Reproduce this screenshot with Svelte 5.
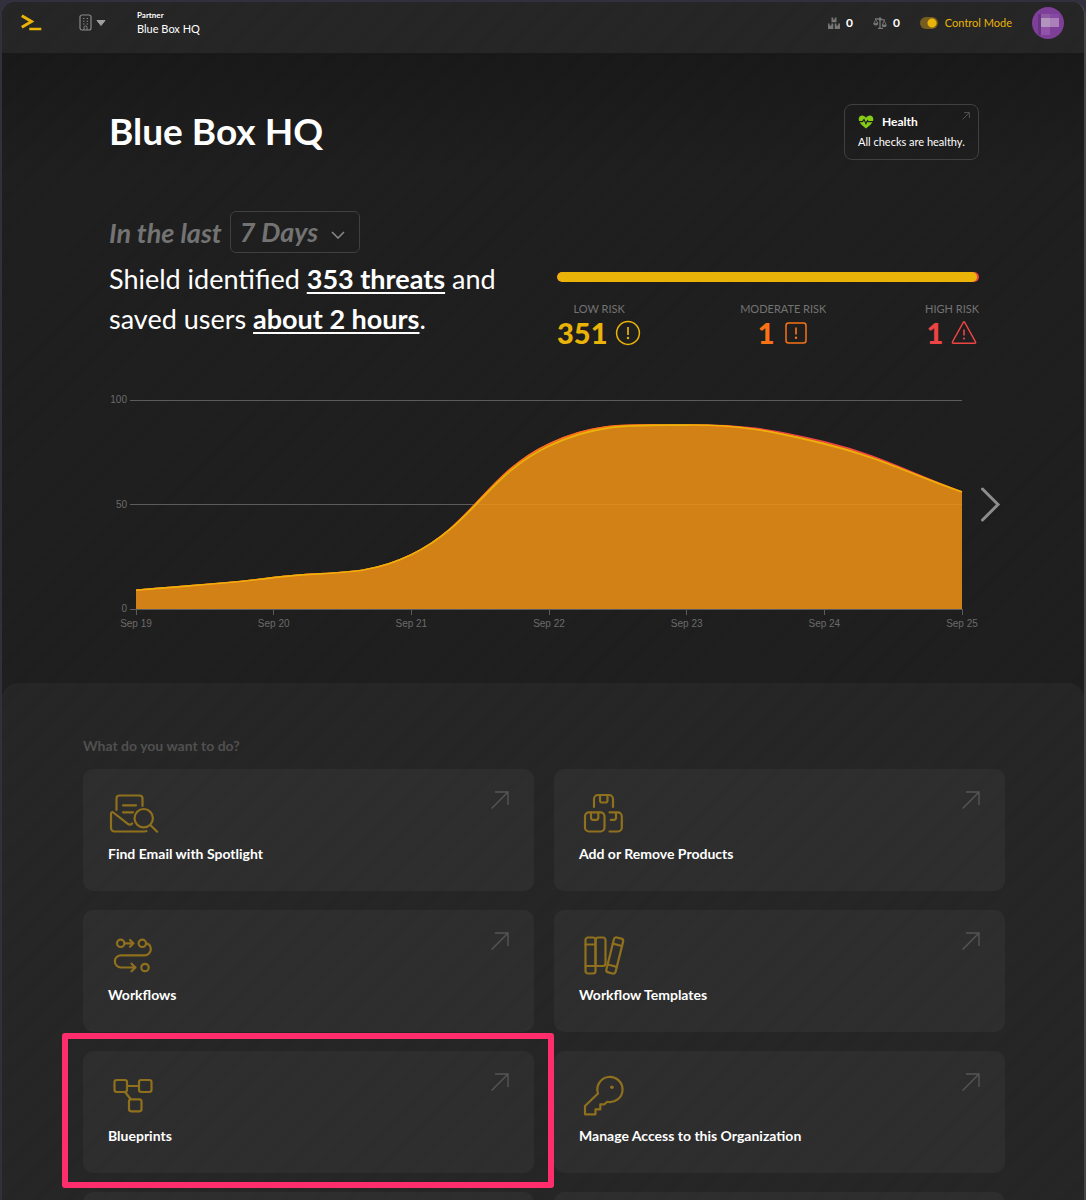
<script lang="ts">
  type Point = { x: number; y: number };

  const days = ['Sep 19', 'Sep 20', 'Sep 21', 'Sep 22', 'Sep 23', 'Sep 24', 'Sep 25'];
  const low = [9, 15, 26, 78, 88, 79, 56];
  const moderate = [0, 0, 0, 1, 0, 0, 0];
  const high = [0, 0, 0, 0, 0, 1, 0];

  const plot = { left: 27, right: 853, top: 10, bottom: 219 };
  const ticks = [0, 50, 100];
  const tension = 0.4;

  const sum = (values: number[]) => values.reduce((a, b) => a + b, 0);
  const total = sum(low) + sum(moderate) + sum(high);

  function xAt(i: number): number {
    return plot.left + (i * (plot.right - plot.left)) / (days.length - 1);
  }

  function yAt(value: number): number {
    return plot.bottom - (value * (plot.bottom - plot.top)) / 100;
  }

  // control points of a cardinal spline, weighted by segment length
  function controls(prev: Point, cur: Point, next: Point) {
    const d01 = Math.hypot(cur.x - prev.x, cur.y - prev.y);
    const d12 = Math.hypot(next.x - cur.x, next.y - cur.y);
    const all = d01 + d12 || 1;
    const fa = (tension * d01) / all;
    const fb = (tension * d12) / all;
    const dx = next.x - prev.x;
    const dy = next.y - prev.y;
    return {
      before: { x: cur.x - fa * dx, y: cur.y - fa * dy },
      after: { x: cur.x + fb * dx, y: cur.y + fb * dy }
    };
  }

  function curve(values: number[]): string {
    const pts = values.map((v, i) => ({ x: xAt(i), y: yAt(v) }));
    const cps = pts.map((p, i) => controls(pts[i - 1] ?? p, p, pts[i + 1] ?? p));
    let d = `M${pts[0].x} ${pts[0].y}`;
    for (let i = 1; i < pts.length; i++) {
      const a = cps[i - 1].after;
      const b = cps[i].before;
      d += `C${a.x} ${a.y} ${b.x} ${b.y} ${pts[i].x} ${pts[i].y}`;
    }
    return d;
  }

  const lowLine = curve(low);
  const moderateLine = curve(low.map((v, i) => v + moderate[i]));
  const highLine = curve(low.map((v, i) => v + moderate[i] + high[i]));

  const actions = [
    { icon: 'spotlight', title: 'Find Email with Spotlight' },
    { icon: 'products', title: 'Add or Remove Products' },
    { icon: 'workflows', title: 'Workflows' },
    { icon: 'templates', title: 'Workflow Templates' },
    { icon: 'blueprints', title: 'Blueprints', highlighted: true },
    { icon: 'access', title: 'Manage Access to this Organization' },
    { icon: '', title: '' },
    { icon: '', title: '' }
  ];

  let period = $state('7 Days');
  let controlMode = $state(true);
</script>

<div class="frame">
  <header>
    <a class="logo" href="#home" aria-label="Home">
      <svg width="22" height="18" viewBox="0 0 22 18">
        <path d="M.8 1.700 10.500 7.500.8 13.300" fill="none" stroke="#eab308" stroke-width="3" />
        <path d="M8.300 15H20.300" stroke="#eab308" stroke-width="2.400" />
      </svg>
    </a>
    <button class="org" aria-label="Switch organization">
      <svg width="14" height="18" viewBox="0 0 14 18" fill="none" stroke="#8a8a8a">
        <rect x="1" y="1" width="11" height="15" rx="2" stroke-width="1.200" />
        <path d="M5 16v-2.600a1.500 1.500 0 0 1 3 0V16" />
        <path d="M4 4.500h1.400M7.600 4.500H9M4 7.300h1.400M7.600 7.300H9M4 10h1.400M7.600 10H9" stroke-width="1.100" />
      </svg>
      <svg width="10" height="6" viewBox="0 0 10 6"><path d="M1 .5h8L5 5.500z" fill="#a0a0a0" stroke="#a0a0a0" stroke-linejoin="round" /></svg>
    </button>
    <div class="tenant">
      <span class="kind">Partner</span>
      <span class="name">Blue Box HQ</span>
    </div>

    <div class="tools">
      <a class="count" href="#products" aria-label="Products">
        <svg width="12" height="12" viewBox="0 0 12 12" fill="#777">
          <path d="M3.500.5h1.700v2h1.600v-2h1.700v4.800h-5zM0 6.500h1.600v1.900h1.800V6.500h1.900V12H.5L0 11.500zM6.700 6.500h1.700v1.900h1.800V6.500H12v5l-.5.5H6.700z" />
        </svg>
        <span>0</span>
      </a>
      <a class="count" href="#balance" aria-label="Balance">
        <svg width="14" height="12" viewBox="0 0 14 12" fill="none" stroke="#777">
          <path d="M7 1v10.300M5 11.300h5M2 1.600 12 3.200" stroke-width="1.300" />
          <circle cx="7" cy="2" r="1.200" fill="#777" />
          <path d="M.8 6.300 2.800 2.300l2 4zM9.200 8l2-4.300 2 4.300z" stroke-width=".9" />
          <path d="M.3 6.300h5a2.500 2.300 0 0 1-5 0zM8.700 8h5a2.500 2.300 0 0 1-5 0z" fill="#777" stroke="none" />
        </svg>
        <span>0</span>
      </a>
      <label class="mode">
        <input type="checkbox" bind:checked={controlMode} />
        Control Mode
      </label>
      <button class="avatar" aria-label="Account">
        <svg width="32" height="32" viewBox="0 0 32 32">
          <circle cx="16" cy="16" r="16" fill="#7e3f98" />
          <path d="M6 7h3v21H6z" fill="#6a3283" />
          <path d="M9 7h9v4H9z" fill="#8d5aa3" />
          <path d="M18 7h9v4h-9z" fill="#8449a0" />
          <path d="M9 11h9v9H9z" fill="#b295bd" />
          <path d="M18 11h9v9h-9z" fill="#aa7fba" />
          <path d="M9 20h9v8H9z" fill="#9152a9" />
        </svg>
      </button>
    </div>
  </header>

  <main>
    <section class="hero">
      <div class="heading">
        <h1>Blue Box HQ</h1>
        <a class="health" href="#health">
          <span class="health-title">
            <svg width="16" height="14" viewBox="0 0 16 14">
              <path d="M8 13.500C5 11 1 8.300.7 4.600.5 2.200 2.200.6 4.200.6 5.800.6 7.200 1.500 8 2.900 8.800 1.500 10.200.6 11.800.6c2 0 3.700 1.600 3.500 4C15 8.300 11 11 8 13.500z" fill="#84cc16" />
              <path d="M0 6.700h4.500L6 4.600l2 4 1.500-3 .8 1.100H16" fill="none" stroke="#1e1e1e" stroke-width="1.200" />
            </svg>
            Health
            <svg class="open" width="8" height="8" viewBox="0 0 8 8"><path d="M.6 7.400 7.200.8M2 .6h5.400V6" fill="none" stroke="#525252" /></svg>
          </span>
          <span class="health-text">All checks are healthy.</span>
        </a>
      </div>

      <div class="summary">
        <div class="story">
          <div class="range">
            <label for="period">In the last</label>
            <div class="select">
              <select id="period" bind:value={period}>
                <option>7 Days</option>
              </select>
              <svg width="14" height="8" viewBox="0 0 14 8"><path d="M1 1l6 6 6-6" fill="none" stroke="#8a8a8a" stroke-width="1.500" /></svg>
            </div>
          </div>
          <p>
            Shield identified <a href="#threats">353 threats</a> and<br />
            saved users <a href="#hours">about 2 hours</a>.
          </p>
        </div>

        <div class="risk">
          <div class="bar">
            <span class="part low" style="width: {(sum(low) / total) * 100}%"></span>
          </div>
          <dl>
            <div class="stat">
              <dt>LOW RISK</dt>
              <dd class="is-low">
                {sum(low)}
                <svg width="26" height="26" viewBox="0 0 26 26" fill="none" stroke="currentColor">
                  <circle cx="13" cy="13" r="11.400" stroke-width="1.500" />
                  <path d="M13 7v8" stroke-width="1.700" />
                  <circle cx="13" cy="18" r="1.200" fill="currentColor" stroke="none" />
                </svg>
              </dd>
            </div>
            <div class="stat">
              <dt>MODERATE RISK</dt>
              <dd class="is-moderate">
                {sum(moderate)}
                <svg width="26" height="26" viewBox="0 0 26 26" fill="none" stroke="currentColor">
                  <rect x="3" y="3" width="20" height="20" rx="2.500" stroke-width="1.500" />
                  <path d="M13 7.500v7" stroke-width="1.700" />
                  <circle cx="13" cy="17.800" r="1.200" fill="currentColor" stroke="none" />
                </svg>
              </dd>
            </div>
            <div class="stat">
              <dt>HIGH RISK</dt>
              <dd class="is-high">
                {sum(high)}
                <svg width="26" height="26" viewBox="0 0 26 26" fill="none" stroke="currentColor">
                  <path d="M12.300 2.300 1.500 21.800q-.6 1.400.8 1.400h21.400q1.400 0 .8-1.400L13.700 2.300q-.7-1-1.400 0z" stroke-width="1.400" />
                  <path d="M13 9.500v6" stroke-width="1.600" />
                  <circle cx="13" cy="18.500" r="1.100" fill="currentColor" stroke="none" />
                </svg>
              </dd>
            </div>
          </dl>
        </div>
      </div>

      <div class="chart-row">
        <svg class="chart" viewBox="0 0 870 240" role="img" aria-label="Threats per day">
          {#each ticks as tick}
            <path class="grid" d="M21 {Math.floor(yAt(tick)) + 0.5}H{plot.right}" />
            <text x="18" y={yAt(tick) + 3} text-anchor="end">{tick}</text>
          {/each}
          <path class="area" d="{highLine}V{plot.bottom}H{plot.left}Z" />
          <path class="line high" d={highLine} />
          <path class="line moderate" d={moderateLine} />
          <path class="line low" d={lowLine} />
          {#each days as day, i}
            <path class="grid" d="M{Math.floor(xAt(i)) + 0.5} {plot.bottom}v6" />
            <text x={xAt(i)} y="237" text-anchor="middle">{day}</text>
          {/each}
        </svg>
        <button class="next" aria-label="Next chart">
          <svg width="22" height="36" viewBox="0 0 22 36"><path d="M3.500 3 19 18.500 3.500 34" fill="none" stroke="#8c8c8c" stroke-width="3" stroke-linecap="round" /></svg>
        </button>
      </div>
    </section>

    <section class="actions">
      <h2>What do you want to do?</h2>
      <div class="cards">
        {#each actions as action}
          {#if action.title}
            <a class="card" class:highlighted={action.highlighted} href="#{action.icon}">
              <span class="card-top">
                <svg class="icon" width="50" height="44" viewBox="0 0 50 44">
                  {#if action.icon === 'spotlight'}
                    <path d="M8.500 19V7.500a3 3 0 0 1 3-3h20a3 3 0 0 1 3 3V15M15 14.300h13M15 21.300h10" />
                    <path d="M38.500 40Q38 40.500 36 40.500H6.500a3.500 3.500 0 0 1-3.500-3.500V22.500c0-1.300 1.200-1.900 2.300-1L19.500 32.700q2.500 2 4.700-.2" />
                    <circle cx="35.700" cy="27.200" r="9.200" />
                    <path d="M42.300 34l6.900 6.700" />
                  {:else if action.icon === 'products'}
                    <path d="M15 16V8a4 4 0 0 1 4-4h11a4 4 0 0 1 4 4v8M21 4v5.500a2 2 0 0 0 2 2h3.500a2 2 0 0 0 2-2V4" />
                    <rect x="6" y="21.300" width="19.500" height="19.200" rx="4" />
                    <path d="M12 21.300v5.500a2 2 0 0 0 2 2h3.300a2 2 0 0 0 2-2v-5.500M30.500 21.300h8.300a4 4 0 0 1 4 4v11.200a4 4 0 0 1-4 4h-8.300M37 21.300v5.500a2 2 0 0 1-2 2h-3.300" />
                  {:else if action.icon === 'workflows'}
                    <circle cx="12.700" cy="11.300" r="3.700" />
                    <circle cx="34.300" cy="11.300" r="3.700" />
                    <circle cx="37" cy="35.500" r="3.700" />
                    <path d="M16.500 11.300h8.500M22 8l3.500 3.300-3.500 3.400M38 11.300c3 .5 4.800 3 4.800 5.700a6.300 6.300 0 0 1-6.300 6.300H13a6.100 6.100 0 0 0 0 12.200h14.500M23.500 31.700l4 3.800-4 3.800" />
                  {:else if action.icon === 'templates'}
                    <rect x="6.500" y="5.500" width="10" height="36" rx="2.500" />
                    <path d="M6.500 12.500h10M6.500 34H24a2.500 2.500 0 0 0 2.500-2.500V8A2.500 2.500 0 0 0 24 5.500h-5A2.500 2.500 0 0 0 16.500 8v26" />
                    <g transform="rotate(14 35.700 23.500)">
                      <rect x="31" y="5.500" width="9.500" height="36" rx="2.500" />
                      <path d="M31 12.500h9.500M31 34h9.500" />
                    </g>
                  {:else if action.icon === 'blueprints'}
                    <rect x="6.500" y="7" width="12.500" height="12" rx="2.200" />
                    <rect x="31" y="7" width="12.500" height="12" rx="2.200" />
                    <rect x="21" y="26.300" width="12.500" height="12" rx="2.200" />
                    <path d="M19 13h12M17.500 19.500l5 6.500" />
                  {:else if action.icon === 'access'}
                    <path d="M19 20.500 6 33v8.300h10.500v-5h4.800v-5h4.200l2.700-2.500a12.600 12.600 0 1 0-9.200-8.300z" />
                    <circle class="dot" cx="32.900" cy="14.300" r="1.800" />
                  {/if}
                </svg>
                <svg class="arrow" width="18" height="18" viewBox="0 0 18 18"><path d="M.6 17.400 17 1M4 1h13v13" /></svg>
              </span>
              <span class="card-title">{action.title}</span>
            </a>
          {:else}
            <div class="card"></div>
          {/if}
        {/each}
      </div>
    </section>
  </main>
</div>

<style>
  :global(body) {
    margin: 0;
    background: #32303c;
  }

  .frame {
    --stripes: repeating-linear-gradient(
      135deg,
      rgba(0, 0, 0, 0) 0 10px,
      rgba(0, 0, 0, 0.03) 14px 18px,
      rgba(0, 0, 0, 0) 22px
    );
    box-sizing: border-box;
    height: calc(100vh - 2px);
    margin: 2px 0 0 2px;
    overflow: hidden;
    border-right: 2px solid #454547;
    border-radius: 14px 14px 0 0;
    background: #1f1f1f;
    color: #fff;
    font-family: Lato, sans-serif;
  }

  a {
    color: inherit;
    text-decoration: none;
  }

  button {
    padding: 0;
    border: 0;
    background: none;
    cursor: pointer;
  }

  svg {
    display: block;
    flex: none;
  }

  header {
    display: flex;
    align-items: center;
    box-sizing: border-box;
    height: 51px;
    padding: 0 20px 10px 19px;
    background: var(--stripes), #262626;
  }

  .org {
    display: flex;
    align-items: center;
    gap: 3px;
    margin: 0 31px 0 36px;
  }

  .tenant {
    display: flex;
    flex-direction: column;
  }

  .kind {
    font-size: 8px;
    font-weight: 700;
    line-height: 12px;
  }

  .name {
    font-size: 11px;
    line-height: 16px;
  }

  .tools {
    display: flex;
    align-items: center;
    gap: 20px;
    margin-left: auto;
  }

  .count {
    display: flex;
    align-items: center;
    gap: 6px;
    font-size: 12px;
    font-weight: 700;
  }

  .mode {
    display: flex;
    align-items: center;
    gap: 7px;
    color: #eab308;
    font-size: 11px;
  }

  .mode input {
    appearance: none;
    width: 18px;
    height: 12px;
    margin: 0;
    border-radius: 6px;
    background: radial-gradient(circle at 6px 6px, #999 4px, #555 5px);
  }

  .mode input:checked {
    background: radial-gradient(circle at 12px 6px, #eab308 4px, #765c1e 5px);
  }

  .hero {
    padding: 51px 105px 53px 107px;
    background: var(--stripes), linear-gradient(#191919, #1f1f1f 120px);
  }

  .heading {
    display: flex;
    align-items: center;
    justify-content: space-between;
  }

  h1 {
    margin: 0;
    padding-bottom: 2px;
    font-size: 37px;
    line-height: 52px;
  }

  .health {
    display: flex;
    flex-direction: column;
    box-sizing: border-box;
    min-width: 135px;
    padding: 7px 13px;
    border: 1px solid #404040;
    border-radius: 8px;
    font-size: 11px;
    line-height: 20px;
  }

  .health-title {
    display: flex;
    align-items: center;
    gap: 8px;
    font-size: 12px;
    font-weight: 700;
  }

  .open {
    align-self: flex-start;
    margin: 0 -5px 0 auto;
  }

  .summary {
    display: grid;
    grid-template-columns: 1fr 422px;
    gap: 26px;
    margin-top: 51px;
  }

  .range {
    display: flex;
    align-items: center;
    gap: 8px;
    color: #737373;
    font-size: 27px;
    font-style: italic;
    font-weight: 700;
  }

  .select {
    position: relative;
  }

  .select select {
    appearance: none;
    display: block;
    width: 130px;
    height: 42px;
    padding: 0 9px 2px;
    border: 1px solid #404040;
    border-radius: 6px;
    background: transparent;
    color: inherit;
    font: inherit;
  }

  .select svg {
    position: absolute;
    top: 20px;
    right: 15px;
    pointer-events: none;
  }

  .story p {
    margin: 6px 0 0;
    font-size: 27px;
    line-height: 40px;
  }

  .story p a {
    font-weight: 700;
    text-decoration: underline;
    text-decoration-thickness: 2px;
    text-underline-offset: 3px;
  }

  .risk {
    padding-top: 61px;
  }

  .bar {
    height: 10px;
    overflow: hidden;
    border-radius: 5px;
    background: #ef4444;
  }

  .part {
    display: block;
    height: 100%;
    border-radius: 5px;
  }

  .part.low {
    background: #eab308;
  }

  dl {
    display: flex;
    justify-content: space-between;
    margin: 20px 0 0;
  }

  .stat {
    display: flex;
    flex-direction: column;
    align-items: center;
  }

  dt {
    color: #737373;
    font-size: 11px;
    line-height: 14px;
  }

  dd {
    display: flex;
    align-items: center;
    gap: 8px;
    margin: 0;
    font-size: 29px;
    font-weight: 900;
    line-height: 34px;
  }

  .is-low {
    color: #eab308;
  }

  .is-moderate {
    color: #f97316;
  }

  .is-high {
    color: #ef4444;
  }

  .chart-row {
    display: flex;
    align-items: center;
    margin: 40px -22px 0 0;
  }

  .chart {
    flex: 1;
    min-width: 0;
  }

  .chart text {
    fill: #6b6b6b;
    font-family: 'Liberation Sans', Arial, sans-serif;
    font-size: 10px;
  }

  .grid {
    stroke: #5c5c5c;
  }

  .area {
    fill: #f09116;
    fill-opacity: 0.86;
  }

  .line {
    fill: none;
    stroke-width: 1.6;
  }

  .line.high {
    stroke: #ef4444;
  }

  .line.moderate {
    stroke: #f97316;
  }

  .line.low {
    stroke: #eab308;
  }

  .next {
    margin-bottom: 12px;
  }

  .actions {
    padding: 53px 79px 0 81px;
    border-radius: 16px 16px 0 0;
    background: var(--stripes), #262626;
  }

  h2 {
    margin: 0 0 13px;
    color: #505050;
    font-size: 14px;
    line-height: 20px;
  }

  .cards {
    display: grid;
    grid-template-columns: 1fr 1fr;
    gap: 19px 20px;
  }

  .card {
    position: relative;
    box-sizing: border-box;
    min-height: 122px;
    padding: 22px 25px;
    border-radius: 10px;
    background: rgba(255, 255, 255, 0.04);
  }

  .card.highlighted::after {
    content: '';
    position: absolute;
    inset: -18px -20px -15px -21px;
    border: 6px solid #ff2d6b;
    border-radius: 3px;
    pointer-events: none;
  }

  .card-top {
    display: flex;
    justify-content: space-between;
  }

  .icon {
    overflow: visible;
    fill: none;
    stroke: #8f701d;
    stroke-width: 2.2;
    stroke-linecap: round;
    stroke-linejoin: round;
  }

  .icon .dot {
    fill: #8f701d;
    stroke: none;
  }

  .arrow {
    fill: none;
    stroke: #555;
    stroke-width: 1.4;
  }

  .card-title {
    display: block;
    margin-top: 9px;
    font-size: 14px;
    font-weight: 700;
    line-height: 20px;
  }
</style>
